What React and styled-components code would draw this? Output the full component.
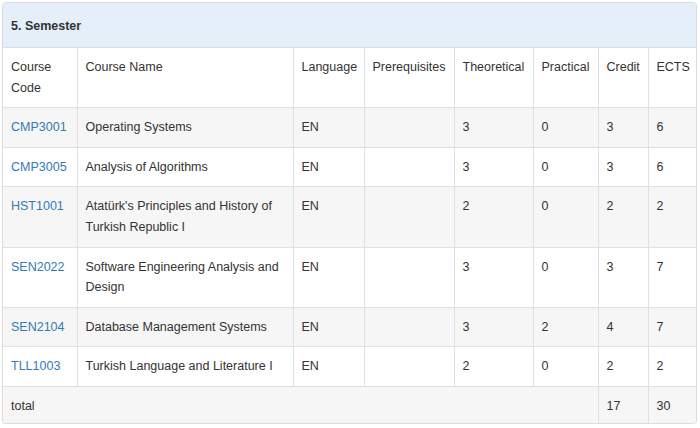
import React from 'react';
import styled, { createGlobalStyle } from 'styled-components';

const GlobalStyle = createGlobalStyle`
  html, body {
    margin: 0;
    padding: 0;
    background: #fff;
  }
  body {
    font-family: "Liberation Sans", Arial, Helvetica, sans-serif;
    font-size: 12.5px;
    color: #333;
  }
`;

const Page = styled.div`
  padding: 2px 3px 0 2px;
`;

const Panel = styled.div`
  border: 1px solid #dcdcdc;
  border-radius: 4px;
  overflow: hidden;
  box-shadow: 0 1px 1px rgba(0, 0, 0, 0.05);
  background: #fff;
`;

const PanelHeading = styled.div`
  background: #e4eff9;
  border-bottom: 1px solid #dcdcdc;
  padding: 13px 8px 10px;
  font-weight: bold;
  font-size: 12.5px;
  line-height: 21px;
  color: #333;
`;

const Table = styled.table`
  width: 100%;
  border-collapse: collapse;
  table-layout: fixed;

  tr + tr > td,
  tr + tr > th {
    border-top: 1px solid #e0e0e0;
  }
`;

const Row = styled.tr`
  background: ${({ $striped }) => ($striped ? '#f6f6f6' : '#fff')};
`;

const Cell = styled.td`
  padding: 9px 8px ${({ $short }) => ($short ? '6px' : '9px')};
  vertical-align: top;
  text-align: left;
  font-weight: normal;
  line-height: 20.6px;
  border-left: 1px solid #e0e0e0;
  &:first-child {
    border-left: none;
  }
`;

const CodeLink = styled.a`
  color: #337ab7;
  text-decoration: none;
`;

const widths = [74, 216, 71, 90, 79, 65, 50, 49];

const headers = [
  'Course Code',
  'Course Name',
  'Language',
  'Prerequisites',
  'Theoretical',
  'Practical',
  'Credit',
  'ECTS',
];

const courses = [
  { code: 'CMP3001', name: 'Operating Systems', lang: 'EN', t: 3, p: 0, c: 3, e: 6 },
  { code: 'CMP3005', name: 'Analysis of Algorithms', lang: 'EN', t: 3, p: 0, c: 3, e: 6 },
  { code: 'HST1001', name: "Atatürk's Principles and History of Turkish Republic I", lang: 'EN', t: 2, p: 0, c: 2, e: 2 },
  { code: 'SEN2022', name: 'Software Engineering Analysis and Design', lang: 'EN', t: 3, p: 0, c: 3, e: 7 },
  { code: 'SEN2104', name: 'Database Management Systems', lang: 'EN', t: 3, p: 2, c: 4, e: 7 },
  { code: 'TLL1003', name: 'Turkish Language and Literature I', lang: 'EN', t: 2, p: 0, c: 2, e: 2 },
];

const App = () => {
  return (
    <Page>
      <GlobalStyle />
      <Panel>
        <PanelHeading>5. Semester</PanelHeading>
        <Table>
          <colgroup>
            {widths.map((w, i) => (
              <col key={i} style={{ width: w }} />
            ))}
          </colgroup>
          <tbody>
            <Row>
              {headers.map((h) => (
                <Cell as="th" key={h}>
                  {h}
                </Cell>
              ))}
            </Row>
            {courses.map((c, i) => (
              <Row key={c.code} $striped={i % 2 === 0}>
                <Cell>
                  <CodeLink href="#">{c.code}</CodeLink>
                </Cell>
                <Cell>{c.name}</Cell>
                <Cell>{c.lang}</Cell>
                <Cell></Cell>
                <Cell>{c.t}</Cell>
                <Cell>{c.p}</Cell>
                <Cell>{c.c}</Cell>
                <Cell>{c.e}</Cell>
              </Row>
            ))}
            <Row $striped>
              <Cell $short colSpan={6}>total</Cell>
              <Cell $short>17</Cell>
              <Cell $short>30</Cell>
            </Row>
          </tbody>
        </Table>
      </Panel>
    </Page>
  );
};

export default App;
